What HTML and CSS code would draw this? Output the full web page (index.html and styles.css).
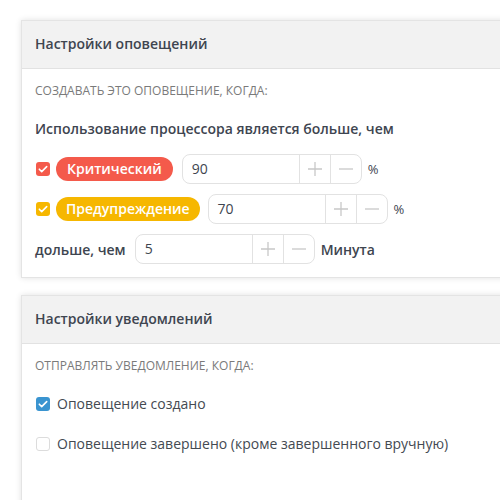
FILE: index.html
```html
<!DOCTYPE html>
<html lang="ru">
<head>
<meta charset="utf-8">
<link rel="stylesheet" href="styles.css">
</head>
<body>
<div class="page">
  <section class="panel panel-alert">
    <div class="panel-head">Настройки оповещений</div>
    <div class="panel-body">
      <div class="sub">Создавать это оповещение, когда:</div>
      <div class="label">Использование процессора является больше, чем</div>
      <div class="rows">
        <div class="row">
          <span class="cb cb-red"><svg viewBox="0 0 14 14"><path d="M3.3 7.2l2.4 2.4 5-5"/></svg></span>
          <span class="badge badge-red">Критический</span>
          <div class="spin">
            <span class="spin-val">90</span>
            <span class="spin-btn"><svg viewBox="0 0 16 16"><path d="M8 1v14M1 8h14"/></svg></span>
            <span class="spin-btn"><svg viewBox="0 0 16 16"><path d="M1 8h14"/></svg></span>
          </div>
          <span class="unit">%</span>
        </div>
        <div class="row">
          <span class="cb cb-yellow"><svg viewBox="0 0 14 14"><path d="M3.3 7.2l2.4 2.4 5-5"/></svg></span>
          <span class="badge badge-yellow">Предупреждение</span>
          <div class="spin">
            <span class="spin-val">70</span>
            <span class="spin-btn"><svg viewBox="0 0 16 16"><path d="M8 1v14M1 8h14"/></svg></span>
            <span class="spin-btn"><svg viewBox="0 0 16 16"><path d="M1 8h14"/></svg></span>
          </div>
          <span class="unit">%</span>
        </div>
        <div class="row">
          <span class="row-label">дольше, чем</span>
          <div class="spin">
            <span class="spin-val">5</span>
            <span class="spin-btn"><svg viewBox="0 0 16 16"><path d="M8 1v14M1 8h14"/></svg></span>
            <span class="spin-btn"><svg viewBox="0 0 16 16"><path d="M1 8h14"/></svg></span>
          </div>
          <span class="unit unit-strong">Минута</span>
        </div>
      </div>
    </div>
  </section>

  <section class="panel panel-notify">
    <div class="panel-head">Настройки уведомлений</div>
    <div class="panel-body">
      <div class="sub">Отправлять уведомление, когда:</div>
      <div class="checks">
        <label class="check">
          <span class="cb cb-blue"><svg viewBox="0 0 14 14"><path d="M3.3 7.2l2.4 2.4 5-5"/></svg></span>
          <span>Оповещение создано</span>
        </label>
        <label class="check">
          <span class="cb cb-empty"></span>
          <span>Оповещение завершено (кроме завершенного вручную)</span>
        </label>
      </div>
    </div>
  </section>
</div>
</body>
</html>
```

FILE: styles.css
```css
html, body {
  margin: 0;
  padding: 0;
  background: #ffffff;
}

body {
  font-family: "Open Sans", "Noto Sans", sans-serif;
  color: #444a52;
  font-size: 14px;
}

.page {
  box-sizing: border-box;
  width: 500px;
  height: 500px;
  overflow: hidden;
  padding: 20px 0 0 21px;
  display: flex;
  flex-direction: column;
  gap: 17px;
}

.panel {
  flex: none;
  background: #fff;
  border: 1px solid #e4e4e4;
  box-shadow: 0 0 6px rgba(0, 0, 0, 0.12);
  width: 520px;
}

.panel-head {
  background: #f2f2f2;
  border-bottom: 1px solid #e2e2e2;
  padding: 13px 13px 14px;
  line-height: 20px;
  font-size: 14px;
  font-weight: 600;
  color: #3e4550;
}

.panel-body {
  padding: 14px 13px 13px;
}

.panel-notify .panel-body {
  padding-bottom: 60px;
}

.sub {
  font-size: 12px;
  line-height: 16px;
  text-transform: uppercase;
  color: #7a7a7a;
}

.label {
  margin-top: 20px;
  font-weight: 600;
  line-height: 20px;
  color: #3e4550;
}

.rows {
  margin-top: 15px;
  display: flex;
  flex-direction: column;
  gap: 10px;
}

.row {
  display: flex;
  align-items: center;
  height: 30px;
}

.cb {
  width: 14px;
  height: 14px;
  border-radius: 3px;
  flex: none;
  display: inline-flex;
  box-sizing: border-box;
  margin-left: 1px;
}

.cb svg {
  width: 14px;
  height: 14px;
  fill: none;
  stroke: #fff;
  stroke-width: 1.6;
  stroke-linecap: round;
  stroke-linejoin: round;
}

.cb-red { background: #f45a4b; }
.cb-yellow { background: #f6b700; }
.cb-blue { background: #3a94d0; }
.cb-empty { background: #fff; border: 1px solid #dcdcdc; }

.badge {
  margin-left: 6px;
  height: 24px;
  line-height: 24px;
  border-radius: 12px;
  padding: 0 11px;
  color: #fff;
  font-weight: 600;
  font-size: 14px;
}

.badge-red { background: #f45a4b; }
.badge-yellow { background: #f6b700; padding: 0 10px; }

.spin {
  margin-left: 9px;
  display: flex;
  width: 180px;
  height: 30px;
  box-sizing: border-box;
  border: 1px solid #e2e2e2;
  border-radius: 8px;
}

.badge-yellow + .spin { margin-left: 8px; }
.row-label + .spin { margin-left: 9px; }

.spin-val {
  flex: 1;
  padding-left: 9px;
  line-height: 28px;
  color: #3e4550;
}

.spin-btn {
  width: 30px;
  border-left: 1px solid #e2e2e2;
  display: flex;
  align-items: center;
  justify-content: center;
}

.spin-btn svg {
  width: 16px;
  height: 16px;
  fill: none;
  stroke: #c8c8c8;
  stroke-width: 1.3;
}

.unit {
  margin-left: 6px;
  font-size: 13px;
  color: #3e4550;
}

.unit-strong {
  font-size: 14px;
  font-weight: 600;
}

.row-label {
  font-weight: 600;
  color: #3e4550;
}

.checks {
  margin-top: 20px;
  display: flex;
  flex-direction: column;
  gap: 20px;
}

.check {
  display: flex;
  align-items: center;
  gap: 7px;
  line-height: 20px;
  color: #444a52;
}
```
